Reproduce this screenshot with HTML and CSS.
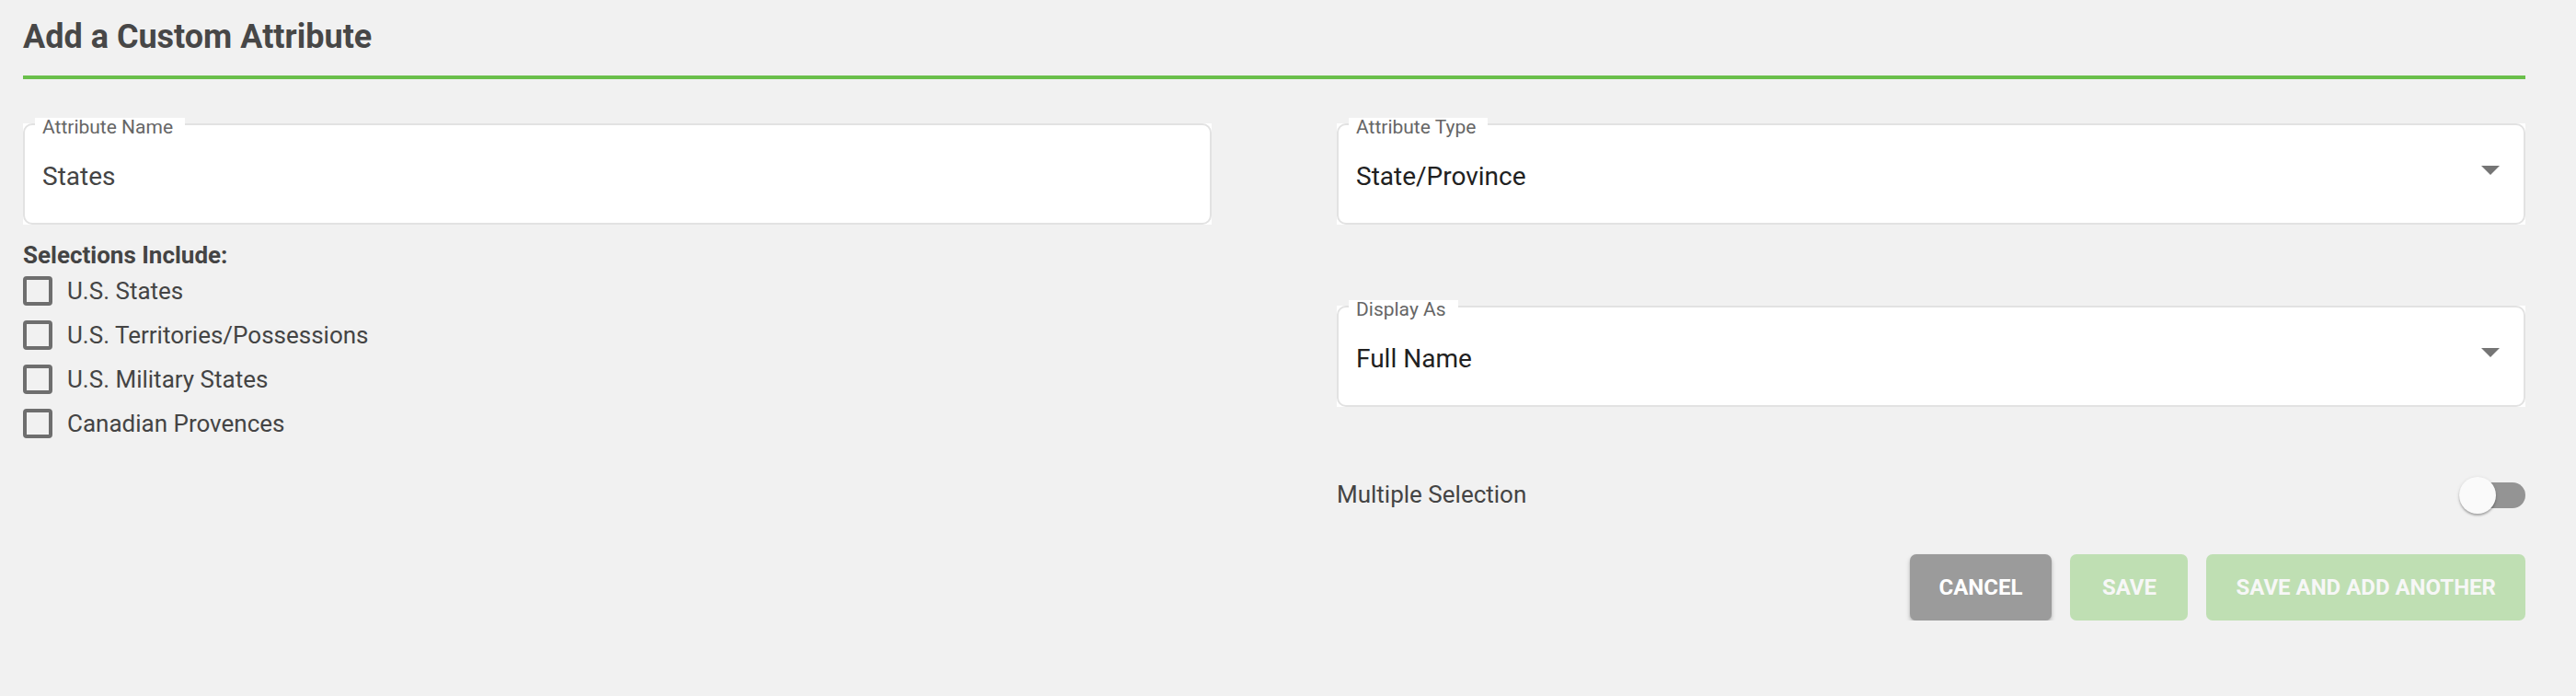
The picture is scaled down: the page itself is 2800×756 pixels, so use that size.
FILE: index.html
```html
<!DOCTYPE html>
<html lang="en">
<head>
<meta charset="utf-8">
<title>Add a Custom Attribute</title>
<link rel="stylesheet" href="styles.css">
</head>
<body>
<div class="page">
  <header class="title-bar">
    <h1 class="title">Add a Custom Attribute</h1>
  </header>

  <div class="form-grid">
    <div class="col">
      <div class="field">
        <span class="field-label">Attribute Name</span>
        <span class="field-value muted">States</span>
      </div>

      <div class="section-title">Selections Include:</div>
      <ul class="check-list">
        <li class="check-row"><span class="check-box"></span><span class="check-text">U.S. States</span></li>
        <li class="check-row"><span class="check-box"></span><span class="check-text">U.S. Territories/Possessions</span></li>
        <li class="check-row"><span class="check-box"></span><span class="check-text">U.S. Military States</span></li>
        <li class="check-row"><span class="check-box"></span><span class="check-text">Canadian Provences</span></li>
      </ul>
    </div>

    <div class="col">
      <div class="field">
        <span class="field-label">Attribute Type</span>
        <span class="field-value">State/Province</span>
        <svg class="caret" width="20" height="10" viewBox="0 0 20 10"><path d="M0 0 L20 0 L10 10 Z" fill="#757575"/></svg>
      </div>

      <div class="field field-gap">
        <span class="field-label">Display As</span>
        <span class="field-value">Full Name</span>
        <svg class="caret" width="20" height="10" viewBox="0 0 20 10"><path d="M0 0 L20 0 L10 10 Z" fill="#757575"/></svg>
      </div>

      <div class="switch-row">
        <span class="switch-text">Multiple Selection</span>
        <span class="switch">
          <span class="switch-track"></span>
          <span class="switch-thumb"></span>
        </span>
      </div>

      <div class="actions">
        <button class="btn btn-cancel">Cancel</button>
        <button class="btn btn-save">Save</button>
        <button class="btn btn-save">Save and Add Another</button>
      </div>
    </div>
  </div>
</div>
</body>
</html>
```

FILE: styles.css
```css
* { box-sizing: border-box; }

html, body {
  margin: 0;
  padding: 0;
  background: #f1f1f1;
  font-family: Roboto, "Liberation Sans", Arial, sans-serif;
}

.page {
  padding: 0 55px 0 25px;
}

.title-bar {
  padding: 19px 0 20px;
  border-bottom: 4px solid #6abf4b;
}

.title {
  margin: 0;
  font-size: 36px;
  line-height: 43px;
  font-weight: 700;
  color: #474747;
}

.form-grid {
  display: grid;
  grid-template-columns: 1fr 1fr;
  column-gap: 136px;
  margin-top: 48px;
}

.col {
  display: flex;
  flex-direction: column;
}

.field {
  position: relative;
  height: 110px;
  background: #ffffff;
  display: flex;
  align-items: center;
  padding: 5px 28px 0 21px;
}

.field::before {
  content: "";
  position: absolute;
  inset: 0;
  border: 2px solid #e2e2e2;
  border-radius: 10px;
  pointer-events: none;
}

.field-gap {
  margin-top: 88px;
}

.field-label {
  position: absolute;
  left: 13px;
  top: -6px;
  padding: 0 13px 0 8px;
  background: #ffffff;
  font-size: 21px;
  line-height: 21px;
  color: #666666;
  z-index: 1;
}

.field-value {
  flex: 1;
  font-size: 28px;
  line-height: 1.2;
  color: #212121;
}

.field-value.muted {
  color: #444444;
}

.caret {
  display: block;
  flex: none;
  margin-bottom: 13px;
}

.section-title {
  margin-top: 18px;
  font-size: 26px;
  line-height: 30px;
  font-weight: 700;
  color: #444444;
}

.check-list {
  list-style: none;
  margin: 0;
  padding: 0;
}

.check-row {
  display: flex;
  align-items: center;
  height: 48px;
  gap: 16px;
}

.check-box {
  width: 32px;
  height: 32px;
  border: 4px solid #6e6e6e;
  border-radius: 4px;
  flex: none;
}

.check-text {
  font-size: 26px;
  line-height: 48px;
  color: #444444;
}

.switch-row {
  margin-top: 66px;
  height: 60px;
  display: flex;
  align-items: center;
  justify-content: space-between;
}

.switch-text {
  font-size: 26px;
  line-height: 1.2;
  color: #444444;
}

.switch {
  position: relative;
  width: 72px;
  height: 40px;
  flex: none;
}

.switch-track {
  position: absolute;
  left: 10px;
  right: 0;
  top: 6px;
  height: 28px;
  border-radius: 14px;
  background: #949494;
}

.switch-thumb {
  position: absolute;
  left: 0;
  top: 0;
  width: 40px;
  height: 40px;
  border-radius: 50%;
  background: #fafafa;
  box-shadow: 0 2px 2px rgba(0, 0, 0, 0.24), 0 1px 4px rgba(0, 0, 0, 0.12);
}

.actions {
  margin-top: 34px;
  display: flex;
  justify-content: flex-end;
  gap: 20px;
}

.btn {
  height: 72px;
  padding: 0 32px;
  border: 0;
  border-radius: 7px;
  font-family: Roboto, "Liberation Sans", Arial, sans-serif;
  font-size: 24px;
  font-weight: 700;
  line-height: 1.2;
  text-transform: uppercase;
  cursor: pointer;
}

.btn-cancel {
  background: #9b9b9b;
  color: #ffffff;
  box-shadow: 0 3px 5px rgba(0, 0, 0, 0.22), 0 1px 2px rgba(0, 0, 0, 0.12);
}

.btn-save {
  background: #bfdfb3;
  color: #f7f7f7;
  min-width: 128px;
}
```
